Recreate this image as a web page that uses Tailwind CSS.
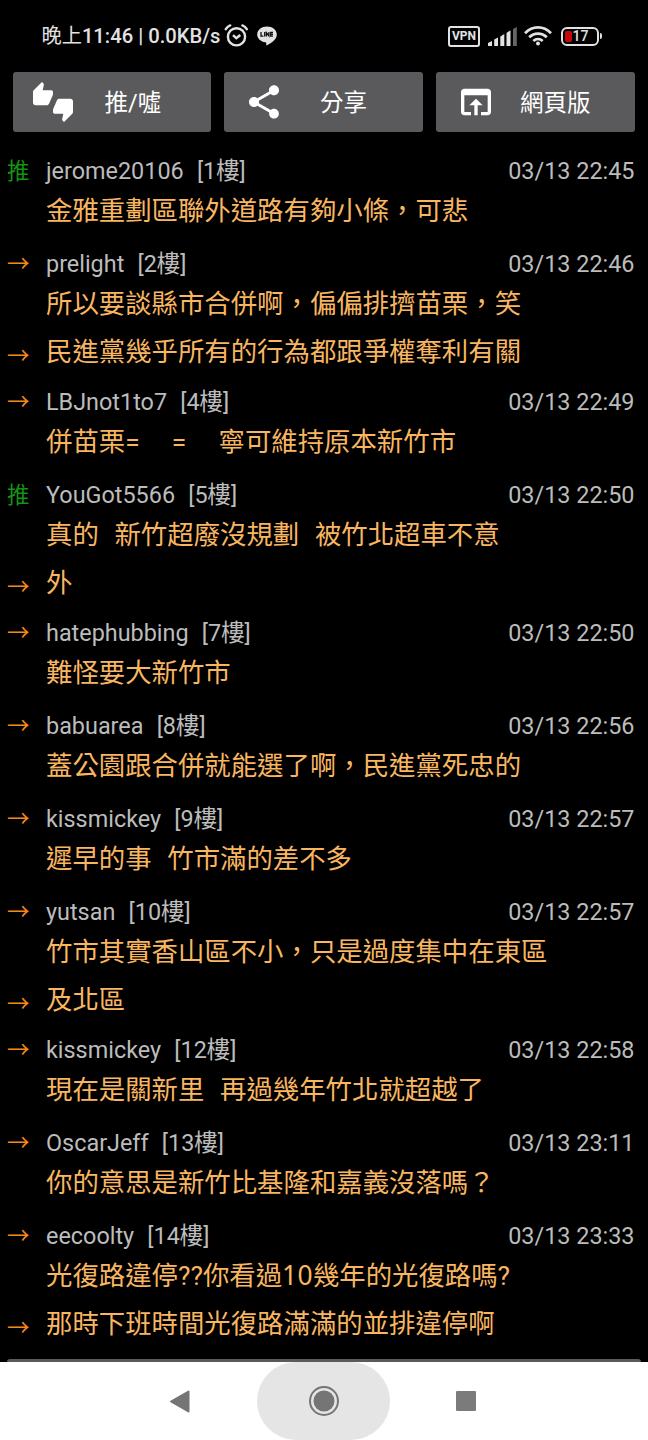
<!DOCTYPE html>
<html lang="zh-Hant">
<head>
<meta charset="utf-8">
<title>推文</title>
<script src="https://cdn.jsdelivr.net/npm/@tailwindcss/browser@4"></script>
</head>
<body class="bg-black">
<div class="flex h-[1440px] w-[648px] flex-col overflow-hidden bg-black font-[Roboto,'Noto_Sans_CJK_TC',sans-serif]">
  <header class="flex h-[72px] shrink-0 items-center pl-[41.500px] pr-[46px] text-[#e2e2e2]">
    <div class="whitespace-pre text-[20.200px] leading-6 font-medium"><span class="font-normal">晚上</span>11:46 | 0.0KB/s</div>
    <svg class="ml-1 size-6" viewBox="0 0 24 24" fill="none" stroke="currentColor" stroke-width="2.400" stroke-linecap="round">
      <circle cx="12.500" cy="12.800" r="8.600"/><path stroke-linecap="butt" d="M9 11.200l3.300 3 4-3.200"/><path d="M1.800 5.200Q3.400 2.400 6.200 1.400M22.800 5.200Q21.200 2.400 18.400 1.400"/>
    </svg>
    <svg class="ml-[9px] h-5 w-5" viewBox="0 0 20 20">
      <path fill="currentColor" d="M10 .5C4.600 .5 .2 4 .2 8.400c0 4 3.500 7.200 8.200 7.800 1.100 .2 1 .7 .8 2.500-.1 .6 .2 .8 .8 .5 3.500-1.800 9.800-5.500 9.800-10.800C19.800 4 15.400 .5 10 .5z"/>
      <path fill="none" stroke="#111" stroke-width="1.300" d="M4 6v4.200h2.400M7.700 6v4.600M9.400 10.600V6.700l2.500 3.200V6M16 6.500h-2.300v3.700H16M13.700 8.400H16"/>
    </svg>
    <div class="ml-auto flex items-center">
      <div class="flex h-[21px] w-8 items-center justify-center rounded-[3px] border-2 border-current text-[12px] leading-none font-bold">VPN</div>
      <svg class="ml-2 h-[19px] w-[29px]" viewBox="0 0 29 19" fill="currentColor">
        <path d="M0 16l4-2V19H0zM6.200 12.500l3.800-2V19H6.200zM12.300 9.500l4-2.500V19h-4zM18.500 6l4-2.800V19h-4z"/><path fill="#666" d="M25 2l3.800-2v19H25z"/>
      </svg>
      <svg class="ml-[7px] h-5 w-7" viewBox="0 0 28 20" fill="none" stroke="currentColor" stroke-width="2.700">
        <path d="M1 7.200C8.500-.5 19.500-.5 27 7.200M5.200 11.300c5-5 12.600-5 17.600 0M9.300 15c2.800-2.600 6.600-2.600 9.400 0"/><circle cx="14" cy="17.500" r="2" fill="currentColor" stroke="none"/>
      </svg>
      <div class="ml-[9px] flex h-[19px] w-[38px] items-center rounded-[6px] border-2 border-current pl-[1.500px]">
        <span class="h-[11px] w-[7px] rounded-[2px] bg-[#c80808]"></span><span class="ml-px text-[14px] leading-none font-medium">17</span>
      </div>
      <div class="ml-px h-[6px] w-[2px] rounded-r bg-current"></div>
    </div>
  </header>

  <nav class="grid h-[60px] shrink-0 grid-cols-[198px_199px_199px] gap-[13px] pl-[13px] text-[23.500px] text-white">
    <div class="flex items-center rounded-[3px] bg-[#5a5a5c] pl-5">
      <svg class="size-10" viewBox="0 0 24 24" fill="currentColor"><path d="M12 6c0-.55-.45-1-1-1H5.820l.66-3.180.02-.23c0-.31-.13-.59-.33-.8L5.380 0 .44 4.940C.17 5.210 0 5.590 0 6v6.500c0 .83.67 1.500 1.500 1.500h6.750c.62 0 1.150-.38 1.380-.91l2.260-5.290c.07-.17.11-.36.11-.55V6zm10.500 4h-6.750c-.62 0-1.150.38-1.380.91l-2.260 5.290c-.07.17-.11.36-.11.55V18c0 .55.45 1 1 1h5.180l-.66 3.180-.02.24c0 .31.13.59.33.8l.79.78 4.940-4.940c.27-.27.44-.65.44-1.060v-6.500c0-.83-.67-1.500-1.500-1.500z"/></svg>
      <span class="ml-[31.500px] pt-1">推/噓</span>
    </div>
    <div class="flex items-center rounded-[3px] bg-[#5a5a5c] pl-5">
      <svg class="size-10" viewBox="0 0 24 24" fill="currentColor"><path d="M18 16.080c-.76 0-1.440.3-1.960.77L8.910 12.700c.05-.23.09-.46.09-.7s-.04-.47-.09-.7l7.050-4.110c.54.5 1.250.81 2.040.81 1.660 0 3-1.340 3-3s-1.340-3-3-3-3 1.340-3 3c0 .24.04.47.09.7L8.040 9.810C7.500 9.310 6.790 9 6 9c-1.660 0-3 1.340-3 3s1.340 3 3 3c.79 0 1.500-.31 2.040-.81l7.120 4.160c-.05.21-.08.43-.08.65 0 1.610 1.310 2.920 2.920 2.920s2.920-1.310 2.920-2.920-1.310-2.920-2.920-2.920z"/></svg>
      <span class="ml-9 pt-1">分享</span>
    </div>
    <div class="flex items-center rounded-[3px] bg-[#5a5a5c] pl-5">
      <svg class="size-10" viewBox="0 0 24 24" fill="currentColor"><path d="M19 4H5c-1.110 0-2 .9-2 2v12c0 1.100.89 2 2 2h4v-2H5V8h14v10h-4v2h4c1.100 0 2-.9 2-2V6c0-1.100-.89-2-2-2zm-7 6l-4 4h3v6h2v-6h3l-4-4z"/></svg>
      <span class="ml-6 pt-1">網頁版</span>
    </div>
  </nav>

  <main class="flex h-[1230px] shrink-0 flex-col overflow-hidden pt-[17px] pr-[13.500px] pl-[7px] whitespace-pre text-[#bcbcbc] text-[23.400px]">
    <section class="flex h-[93px] shrink-0 flex-col pt-[3px]">
      <div class="flex h-10 items-center"><span class="w-[39px] text-[22.500px] text-[#149414]">推</span><span class="[word-spacing:0.800px]">jerome20106  [1樓]</span><time class="ml-auto">03/13 22:45</time></div>
      <p class="flex h-10 items-center pl-[39px] text-[26.400px] text-[#f9b660] [word-spacing:1.500px]">金雅重劃區聯外道路有夠小條，可悲</p>
    </section>
    <section class="flex h-[138px] shrink-0 flex-col pt-[3px]">
      <div class="flex h-10 shrink-0 items-center"><span class="w-[39px] text-[22.500px] text-[#f58a1c]">→</span><span class="[word-spacing:0.800px]">prelight  [2樓]</span><time class="ml-auto">03/13 22:46</time></div>
      <p class="flex h-10 shrink-0 items-center pl-[39px] text-[26.400px] text-[#f9b660] [word-spacing:1.500px]">所以要談縣市合併啊，偏偏排擠苗栗，笑</p>
      <div class="flex h-[55px] shrink-0 items-center"><span class="w-[39px] pt-2 text-[22.500px] text-[#f58a1c]">→</span><p class="text-[26.400px] text-[#f9b660]">民進黨幾乎所有的行為都跟爭權奪利有關</p></div>
    </section>
    <section class="flex h-[93px] shrink-0 flex-col pt-[3px]">
      <div class="flex h-10 items-center"><span class="w-[39px] text-[22.500px] text-[#f58a1c]">→</span><span class="[word-spacing:0.800px]">LBJnot1to7  [4樓]</span><time class="ml-auto">03/13 22:49</time></div>
      <p class="flex h-10 items-center pl-[39px] text-[26.400px] text-[#f9b660] [word-spacing:1.500px]">併苗栗=    =    寧可維持原本新竹市</p>
    </section>
    <section class="flex h-[138px] shrink-0 flex-col pt-[3px]">
      <div class="flex h-10 shrink-0 items-center"><span class="w-[39px] text-[22.500px] text-[#149414]">推</span><span class="[word-spacing:0.800px]">YouGot5566  [5樓]</span><time class="ml-auto">03/13 22:50</time></div>
      <p class="flex h-10 shrink-0 items-center pl-[39px] text-[26.400px] text-[#f9b660] [word-spacing:1.300px]">真的  新竹超廢沒規劃  被竹北超車不意</p>
      <div class="flex h-[55px] shrink-0 items-center"><span class="w-[39px] pt-2 text-[22.500px] text-[#f58a1c]">→</span><p class="text-[26.400px] text-[#f9b660]">外</p></div>
    </section>
    <section class="flex h-[93px] shrink-0 flex-col pt-[3px]">
      <div class="flex h-10 items-center"><span class="w-[39px] text-[22.500px] text-[#f58a1c]">→</span><span class="[word-spacing:0.800px]">hatephubbing  [7樓]</span><time class="ml-auto">03/13 22:50</time></div>
      <p class="flex h-10 items-center pl-[39px] text-[26.400px] text-[#f9b660] [word-spacing:1.500px]">難怪要大新竹市</p>
    </section>
    <section class="flex h-[93px] shrink-0 flex-col pt-[3px]">
      <div class="flex h-10 items-center"><span class="w-[39px] text-[22.500px] text-[#f58a1c]">→</span><span class="[word-spacing:0.800px]">babuarea  [8樓]</span><time class="ml-auto">03/13 22:56</time></div>
      <p class="flex h-10 items-center pl-[39px] text-[26.400px] text-[#f9b660] [word-spacing:1.500px]">蓋公園跟合併就能選了啊，民進黨死忠的</p>
    </section>
    <section class="flex h-[93px] shrink-0 flex-col pt-[3px]">
      <div class="flex h-10 items-center"><span class="w-[39px] text-[22.500px] text-[#f58a1c]">→</span><span class="[word-spacing:0.800px]">kissmickey  [9樓]</span><time class="ml-auto">03/13 22:57</time></div>
      <p class="flex h-10 items-center pl-[39px] text-[26.400px] text-[#f9b660] [word-spacing:1.300px]">遲早的事  竹市滿的差不多</p>
    </section>
    <section class="flex h-[138px] shrink-0 flex-col pt-[3px]">
      <div class="flex h-10 shrink-0 items-center"><span class="w-[39px] text-[22.500px] text-[#f58a1c]">→</span><span class="[word-spacing:0.800px]">yutsan  [10樓]</span><time class="ml-auto">03/13 22:57</time></div>
      <p class="flex h-10 shrink-0 items-center pl-[39px] text-[26.400px] text-[#f9b660] [word-spacing:1.500px]">竹市其實香山區不小，只是過度集中在東區</p>
      <div class="flex h-[55px] shrink-0 items-center"><span class="w-[39px] pt-2 text-[22.500px] text-[#f58a1c]">→</span><p class="text-[26.400px] text-[#f9b660]">及北區</p></div>
    </section>
    <section class="flex h-[93px] shrink-0 flex-col pt-[3px]">
      <div class="flex h-10 items-center"><span class="w-[39px] text-[22.500px] text-[#f58a1c]">→</span><span class="[word-spacing:0.800px]">kissmickey  [12樓]</span><time class="ml-auto">03/13 22:58</time></div>
      <p class="flex h-10 items-center pl-[39px] text-[26.400px] text-[#f9b660] [word-spacing:1.300px]">現在是關新里  再過幾年竹北就超越了</p>
    </section>
    <section class="flex h-[93px] shrink-0 flex-col pt-[3px]">
      <div class="flex h-10 items-center"><span class="w-[39px] text-[22.500px] text-[#f58a1c]">→</span><span class="[word-spacing:0.800px]">OscarJeff  [13樓]</span><time class="ml-auto">03/13 23:11</time></div>
      <p class="flex h-10 items-center pl-[39px] text-[26.400px] text-[#f9b660] [word-spacing:1.500px]">你的意思是新竹比基隆和嘉義沒落嗎？</p>
    </section>
    <section class="flex h-[138px] shrink-0 flex-col pt-[3px]">
      <div class="flex h-10 shrink-0 items-center"><span class="w-[39px] text-[22.500px] text-[#f58a1c]">→</span><span class="[word-spacing:0.800px]">eecoolty  [14樓]</span><time class="ml-auto">03/13 23:33</time></div>
      <p class="h-10 shrink-0 pl-[39px] text-[26.400px] leading-[37px] text-[#f9b660]">光復路違停??你看過<span class="font-['Noto_Sans'] tracking-[0.300px]">10</span>幾年的光復路嗎?</p>
      <div class="flex h-[55px] shrink-0 items-center"><span class="w-[39px] pt-2 text-[22.500px] text-[#f58a1c]">→</span><p class="text-[26.400px] text-[#f9b660]">那時下班時間光復路滿滿的並排違停啊</p></div>
    </section>
    <div class="mt-[7px] -mr-[6.500px] h-10 shrink-0 rounded-[3px] bg-[#5a5a5c]"></div>
  </main>

  <footer class="grid h-[78px] shrink-0 grid-cols-[257px_133px_258px] items-center bg-white">
    <svg class="ml-[169px] h-[23px] w-[21px]" viewBox="0 0 21 23"><path d="M2 11.500L19.500 1.500v20z" fill="#757575" stroke="#757575" stroke-linejoin="round" stroke-width="2"/></svg>
    <div class="flex h-[78px] items-center justify-center rounded-full bg-[#e5e5e5]">
      <svg class="size-[30px]" viewBox="0 0 30 30"><circle cx="15" cy="15" r="14" fill="none" stroke="#757575" stroke-width="2"/><circle cx="15" cy="15" r="10.500" fill="#757575"/></svg>
    </div>
    <div class="ml-[66px] size-5 rounded-[1px] bg-[#7b7b7b]"></div>
  </footer>
</div>
</body>
</html>
